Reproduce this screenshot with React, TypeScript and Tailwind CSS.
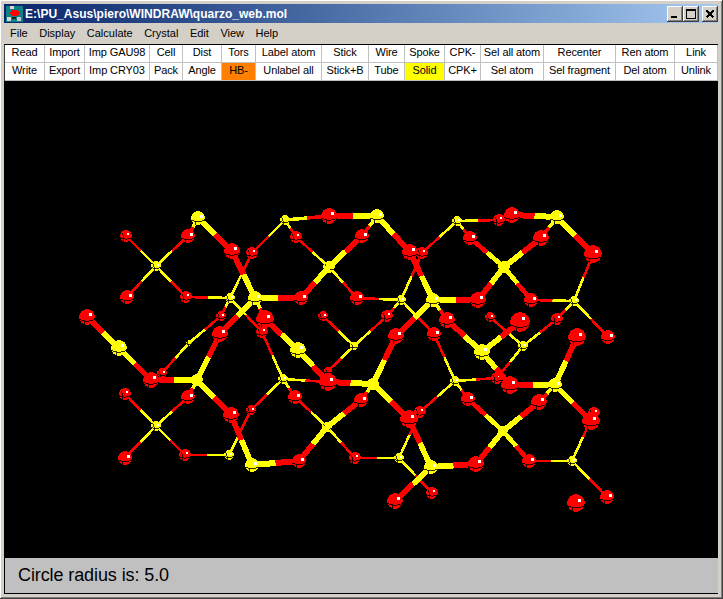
import React from "react";

type P = [number, number, number];
const SI: P[] = [[156,266,4],[198,218,6],[255,298,6],[230,298,4],[285,220,4],[329,267,5],[377,216,6],[401,300,4],[433,300,6],[457,221,4],[504,267,5],[557,217,6],[574,301,4],[523,346,4],[482,352,7],[354,346,3],[298,350,7],[189,343,2],[119,348,7],[197,380,5],[156,426,4],[229,455,4],[252,465,6],[283,379,4],[327,427,4],[373,384,5],[399,458,4],[431,467,6],[455,381,4],[503,431,4],[555,385,6],[572,461,4]];
const OX: P[] = [[126,236,5],[188,236,6],[127,297,6],[186,297,5],[232,251,7],[301,298,6],[252,253,5],[329,216,7],[296,237,5],[362,236,6],[410,252,7],[357,298,6],[478,300,7],[422,253,5],[512,215,7],[499,220,5],[470,238,6],[541,238,7],[593,254,8],[531,300,6],[608,337,6],[520,322,9],[577,337,8],[490,317,4],[557,319,5],[447,320,7],[396,336,7],[434,334,6],[387,316,5],[323,316,4],[265,319,8],[262,332,5],[220,334,7],[221,316,4],[87,317,7],[151,380,7],[162,373,4],[188,397,6],[125,394,5],[125,458,6],[185,455,5],[231,415,7],[251,410,4],[299,461,6],[295,397,6],[328,382,8],[328,371,3],[361,400,6],[409,419,8],[420,412,5],[355,458,5],[476,464,7],[395,501,7],[432,493,5],[510,385,8],[497,378,5],[468,399,6],[539,402,7],[591,421,8],[594,413,5],[529,461,6],[607,497,6],[576,503,8]];

// Si x, Si y, O x, O y, width
const BONDS: number[][] = [
  [156,266,126,236,2],[156,266,188,236,2],[156,266,127,297,2],[156,266,186,297,2],
  [198,218,188,236,3],[198,218,232,251,5],[255,298,232,251,5],[230,298,186,297,2],[230,298,252,253,2],
  [285,220,252,253,2],[285,220,329,216,3],[285,220,296,237,2],[329,267,296,237,2],[329,267,301,298,5],
  [255,298,301,298,6],[329,267,362,236,5],[329,267,357,298,2],[377,216,329,216,6],[377,216,362,236,3],
  [377,216,410,252,5],[433,300,410,252,5],[433,300,478,300,6],[401,300,357,298,2],[401,300,422,253,2],
  [457,221,422,253,2],[457,221,499,220,2],[457,221,470,238,2],[504,267,470,238,4],[504,267,478,300,5],
  [504,267,541,238,5],[504,267,531,300,4],[557,217,541,238,3],[557,217,512,215,6],[557,217,593,254,5],
  [574,301,593,254,2],[574,301,531,300,2],[574,301,608,337,2],[574,301,557,319,2],
  [230,298,221,316,2],[189,343,221,316,2],[189,343,162,373,2],[230,298,262,332,2],
  [255,298,220,334,5],[197,380,220,334,5],[255,298,265,319,3],[298,350,265,319,5],[298,350,328,382,5],
  [283,379,262,332,2],[354,346,323,316,2],[354,346,387,316,2],[401,300,387,316,2],[354,346,328,371,2],
  [401,300,434,334,2],[455,381,434,334,2],[433,300,396,336,5],[373,384,396,336,5],[433,300,447,320,3],
  [482,352,447,320,5],[482,352,510,385,5],[482,352,520,322,5],[523,346,490,317,2],[523,346,557,319,2],
  [523,346,497,378,2],[555,385,577,337,5],[555,385,510,385,6],[555,385,539,402,3],[555,385,591,421,5],
  [119,348,87,317,5],[119,348,151,380,5],[197,380,151,380,6],[197,380,188,397,3],[197,380,231,415,5],
  [252,465,231,415,5],[252,465,299,461,6],[229,455,251,410,2],[283,379,251,410,2],[229,455,185,455,2],
  [156,426,125,394,2],[156,426,188,397,2],[156,426,125,458,2],[156,426,185,455,2],
  [283,379,328,382,2],[283,379,295,397,2],[327,427,295,397,2],[327,427,299,461,5],[327,427,361,400,5],
  [327,427,355,458,2],[373,384,328,382,6],[373,384,361,400,3],[373,384,409,419,5],[431,467,409,419,5],
  [431,467,476,464,6],[431,467,395,501,5],[399,458,355,458,2],[399,458,420,412,2],[399,458,432,493,2],
  [455,381,420,412,2],[455,381,497,378,2],[455,381,468,399,2],[503,431,468,399,4],[503,431,476,464,5],
  [503,431,539,402,5],[503,431,529,461,4],[572,461,529,461,2],[572,461,594,413,2],[572,461,607,497,2],
];

function Atom({ a, fill }: { a: P; fill: string }) {
  const [x, y, r0] = a;
  const r = r0 + 0.8;
  return (
    <g>
      <circle cx={x} cy={y} r={r} fill={fill} />
      <path
        d={`M${x - r} ${y + r * 0.3} Q${x} ${y + r * 0.8} ${x + r} ${y + r * 0.3}`}
        fill="none"
        stroke="#000"
        strokeWidth={0.8}
      />
      <path
        d={`M${x - r * 0.35} ${y + r * 0.5} L${x - r * 0.35} ${y + r}`}
        fill="none"
        stroke="#000"
        strokeWidth={0.8}
      />
      {r0 < 6 && (
        <path
          d={`M${x - r * 0.7} ${y - r * 0.55} Q${x - r * 0.35} ${y} ${x - r * 0.35} ${y + r * 0.5}`}
          fill="none"
          stroke="#000"
          strokeWidth={0.8}
        />
      )}
      {r0 >= 4 && (
        <rect
          x={Math.round(x + r * 0.25)}
          y={Math.round(y - r * 0.5)}
          width={r0 >= 6 ? 3 : 2}
          height={r0 >= 6 ? 3 : 2}
          fill="#fff"
        />
      )}
    </g>
  );
}

function Bond({ b }: { b: number[] }) {
  const [x1, y1, x2, y2, w] = b;
  const mx = (x1 + x2) / 2;
  const my = (y1 + y2) / 2;
  return (
    <g strokeWidth={w >= 6 ? 6 : w + 0.6}>
      <line x1={x1} y1={y1} x2={mx} y2={my} stroke="#ffff00" />
      <line x1={mx} y1={my} x2={x2} y2={y2} stroke="#ff0000" />
    </g>
  );
}

function Molecule() {
  const thin = BONDS.filter((b) => b[4] <= 2);
  const thick = BONDS.filter((b) => b[4] > 2).sort((a, b) => a[4] - b[4]);
  const atoms: { a: P; fill: string }[] = [
    ...SI.map((a) => ({ a, fill: "#ffff00" })),
    ...OX.map((a) => ({ a, fill: "#ff0000" })),
  ];
  const small = atoms.filter((t) => t.a[2] <= 5);
  const big = atoms.filter((t) => t.a[2] > 5).sort((p, q) => p.a[2] - q.a[2]);
  return (
    <svg
      width={714}
      height={477}
      viewBox="4 81 714 477"
      shapeRendering="crispEdges"
      className="block"
    >
      {thin.map((b, i) => (
        <Bond key={i} b={b} />
      ))}
      {small.map((t, i) => (
        <Atom key={i} a={t.a} fill={t.fill} />
      ))}
      {thick.map((b, i) => (
        <Bond key={i} b={b} />
      ))}
      {big.map((t, i) => (
        <Atom key={i} a={t.a} fill={t.fill} />
      ))}
    </svg>
  );
}

const ROW1 = ["Read","Import","Imp GAU98","Cell","Dist","Tors","Label atom","Stick","Wire","Spoke","CPK-","Sel all atom","Recenter","Ren atom","Link"];
const ROW2 = ["Write","Export","Imp CRY03","Pack","Angle","HB-","Unlabel all","Stick+B","Tube","Solid","CPK+","Sel atom","Sel fragment","Del atom","Unlink"];

function Cell({ label, bg }: { label: string; bg: string }) {
  return (
    <div className={`flex items-center justify-center border-r border-b border-[#c0c0c0] pb-[3px] text-[11px] leading-none tracking-[-0.1px] text-black ${bg}`}>
      {label}
    </div>
  );
}

function CapButton({ children, className }: { children: React.ReactNode; className: string }) {
  return (
    <div className={`flex h-[16px] w-[16px] items-center justify-center bg-[#d4d0c8] shadow-[inset_-1px_-1px_0_#404040,inset_1px_1px_0_#ffffff,inset_-2px_-2px_0_#808080] ${className}`}>
      {children}
    </div>
  );
}

export default function App() {
  return (
    <div className="flex h-[599px] w-[723px] flex-col overflow-hidden bg-[#d4d0c8] pt-[4px] pr-[5px] pb-[5px] pl-[4px] font-['Liberation_Sans',Arial,sans-serif] shadow-[inset_-1px_-1px_0_#404040,inset_1px_1px_0_#ffffff,inset_-2px_-2px_0_#808080]">
      <div className="flex h-[19px] shrink-0 items-center bg-gradient-to-r from-[#0a246a] to-[#a6caf0] pl-[2px]">
        <svg width="17" height="16" viewBox="0 0 17 16" shapeRendering="crispEdges" className="shrink-0">
          <rect width="17" height="16" fill="#0f7f86" />
          <rect x="4" y="0" width="4" height="3" fill="#d8d8d8" />
          <ellipse cx="9" cy="7" rx="5" ry="3" fill="#ff0000" />
          <circle cx="3" cy="13" r="2.5" fill="#d8d8d8" />
          <circle cx="13" cy="13" r="2.5" fill="#c8c8c8" />
          <rect x="6" y="11" width="4" height="2" fill="#202020" />
        </svg>
        <span className="ml-[2px] text-[12px] leading-none font-bold tracking-[0.02px] whitespace-nowrap text-white">
          E:\PU_Asus\piero\WINDRAW\quarzo_web.mol
        </span>
        <div className="ml-auto flex items-center">
          <CapButton className="">
            <div className="mt-[7px] mr-[3px] h-[2px] w-[6px] bg-black" />
          </CapButton>
          <CapButton className="mr-[3px]">
            <div className="h-[10px] w-[10px] border border-t-2 border-black" />
          </CapButton>
          <CapButton className="">
            <svg width="9" height="8" viewBox="0 0 9 8" shapeRendering="crispEdges">
              <path d="M0.5 0.5 L7.5 7.5 M7.5 0.5 L0.5 7.5" stroke="#000" strokeWidth="2" />
            </svg>
          </CapButton>
        </div>
      </div>
      <div className="flex h-[21px] shrink-0 items-center gap-[11.5px] pl-[6px] text-[11px] text-black">
        {["File","Display","Calculate","Crystal","Edit","View","Help"].map((m) => (
          <span key={m}>{m}</span>
        ))}
      </div>
      <div className="grid h-[37px] shrink-0 grid-cols-[40px_40px_65px_33px_39px_34px_66px_47px_36px_40px_36px_63px_72px_59px_43px] grid-rows-[18px_18px] border-t border-l border-t-black border-l-[#404040]">
        {ROW1.map((l) => (
          <Cell key={l} label={l} bg="bg-white" />
        ))}
        {ROW2.map((l) => (
          <Cell
            key={l}
            label={l}
            bg={l === "HB-" ? "bg-[#ff8000]" : l === "Solid" ? "bg-[#ffff00]" : "bg-white"}
          />
        ))}
      </div>
      <div className="h-[477px] shrink-0 bg-black">
        <Molecule />
      </div>
      <div className="flex flex-1 items-center border-b border-l border-b-black border-l-black bg-[#c0c0c0] pl-[13px] text-[18px] tracking-[-0.1px] text-black">
        Circle radius is: 5.0
      </div>
    </div>
  );
}
